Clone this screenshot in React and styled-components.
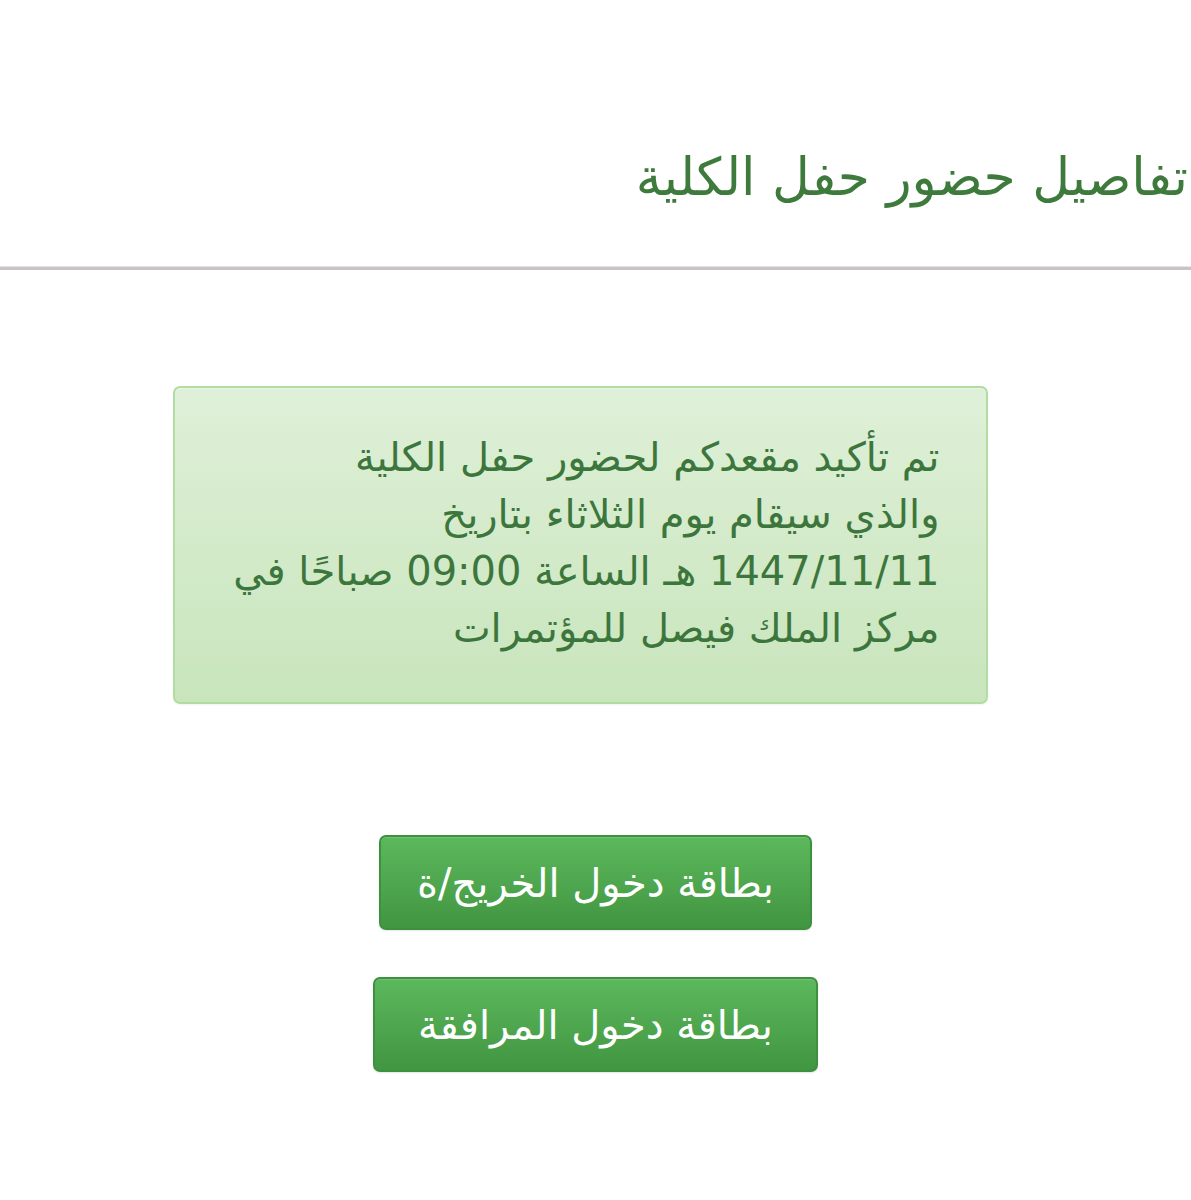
import React from "react";
import styled, { createGlobalStyle } from "styled-components";

const GlobalStyle = createGlobalStyle`
  html, body {
    margin: 0;
    padding: 0;
    background: #ffffff;
  }
  body {
    font-family: "DejaVu Sans", "Noto Sans", sans-serif;
  }
`;

const Page = styled.div`
  direction: rtl;
  width: 1191px;
  min-height: 1200px;
  overflow: hidden;
`;

const Header = styled.header`
  box-sizing: border-box;
  height: 270px;
  padding: 149px 3px 0 0;
  border-bottom: 3px solid #c7c3c7;
  box-shadow: 0 -1px 0 #e6e3e6 inset;
`;

const Title = styled.h1`
  margin: 0;
  font-size: 52px;
  font-weight: 400;
  line-height: 1.1;
  color: #3d7a3c;
`;

const Body = styled.main`
  display: flex;
  flex-direction: column;
  align-items: center;
  padding-top: 116px;
`;

const Alert = styled.div`
  box-sizing: border-box;
  width: 815px;
  height: 318px;
  margin-right: 31px;
  padding: 41px 46px 0 46px;
  border: 2px solid #b3dca3;
  border-radius: 7px;
  background: linear-gradient(to bottom, #dff0d8 0%, #c8e5bc 100%);
  box-shadow: inset 0 1px 0 rgba(255, 255, 255, 0.3), 0 1px 2px rgba(0, 0, 0, 0.05);
  color: #3c763d;
  font-size: 40px;
  line-height: 57px;
`;

const Line = styled.div`
  white-space: nowrap;
`;

const Actions = styled.div`
  display: flex;
  flex-direction: column;
  align-items: center;
  gap: 47px;
  margin-top: 131px;
`;

const CardButton = styled.button`
  box-sizing: border-box;
  height: 95px;
  padding: 0 ${({ $pad }) => $pad}px;
  border: 2px solid #3e8f3e;
  border-radius: 7px;
  background: linear-gradient(to bottom, #5cb85c 0%, #419641 100%);
  box-shadow: inset 0 1px 0 rgba(255, 255, 255, 0.15), 0 1px 2px rgba(0, 0, 0, 0.1);
  color: #ffffff;
  font-family: "DejaVu Sans", "Noto Sans", sans-serif;
  font-size: 40px;
  font-weight: 400;
  direction: rtl;
  cursor: pointer;
`;

const lines = [
  "تم تأكيد مقعدكم لحضور حفل الكلية",
  "والذي سيقام يوم الثلاثاء بتاريخ",
  "1447/11/11 هـ الساعة 09:00 صباحًا في",
  "مركز الملك فيصل للمؤتمرات",
];

export default function App() {
  return (
    <>
      <GlobalStyle />
      <Page>
        <Header>
          <Title>تفاصيل حضور حفل الكلية</Title>
        </Header>
        <Body>
          <Alert>
            {lines.map((l) => (
              <Line key={l}>{l}</Line>
            ))}
          </Alert>
          <Actions>
            <CardButton $pad={36}>بطاقة دخول الخريج/ة</CardButton>
            <CardButton $pad={43}>بطاقة دخول المرافقة</CardButton>
          </Actions>
        </Body>
      </Page>
    </>
  );
}
